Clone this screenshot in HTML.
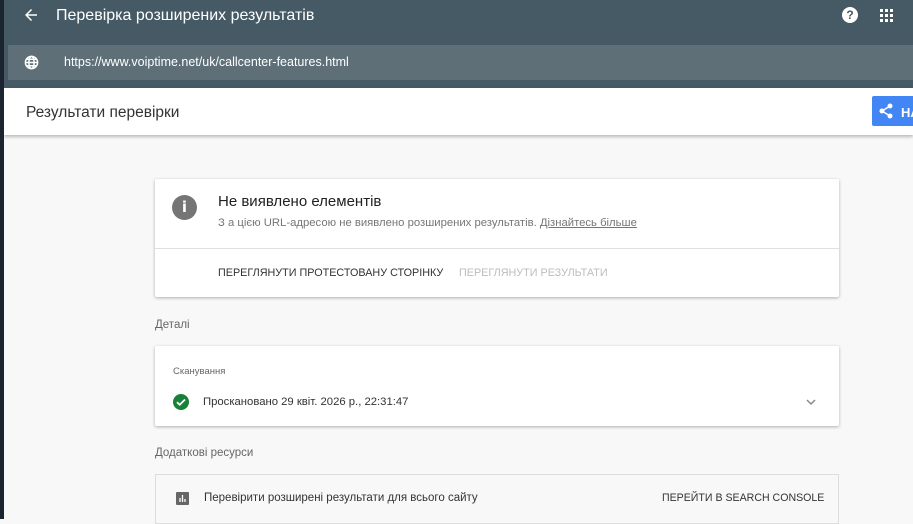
<!DOCTYPE html>
<html><head><meta charset="utf-8"><style>
*{margin:0;padding:0;box-sizing:border-box}
body{width:913px;height:519px;overflow:hidden;background:#f8f8f8;font-family:"Liberation Sans","Noto Sans CJK SC",sans-serif;position:relative}
.abs{position:absolute;white-space:nowrap}
.top{left:0;top:0;width:913px;height:88px;background:#455a64}
.strip{left:0;top:0;width:4px;height:519px;background:#1c2430;z-index:5}
.url{left:8px;top:45px;width:905px;height:35px;background:#5e6f78}
.bar{left:4px;top:88px;width:909px;height:47px;background:#fff;box-shadow:0 2px 3px rgba(0,0,0,.25)}
.card{background:#fff;box-shadow:0 1px 3px rgba(0,0,0,.3);border-radius:2px}
</style></head><body>
<div class="abs strip"></div>
<div class="abs top"></div>
<svg class="abs" style="left:22px;top:6px" width="18" height="18" viewBox="0 0 24 24"><path d="M20 11H7.8l5.6-5.6L12 4l-8 8 8 8 1.4-1.4L7.8 13H20z" fill="#fff"/></svg>
<div class="abs" style="left:56px;top:7px;color:#fff;font-size:16px">Перевірка розширених результатів</div>
<div class="abs" style="left:842px;top:7px;width:16px;height:16px;border-radius:50%;background:#fff;color:#455a64;font-size:12px;font-weight:bold;text-align:center;line-height:16px">?</div>
<svg class="abs" style="left:880px;top:9px" width="13" height="13" viewBox="0 0 13 13" fill="#fff"><rect x="0" y="0" width="3" height="3"/><rect x="5" y="0" width="3" height="3"/><rect x="10" y="0" width="3" height="3"/><rect x="0" y="5" width="3" height="3"/><rect x="5" y="5" width="3" height="3"/><rect x="10" y="5" width="3" height="3"/><rect x="0" y="10" width="3" height="3"/><rect x="5" y="10" width="3" height="3"/><rect x="10" y="10" width="3" height="3"/></svg>
<div class="abs url"></div>
<svg class="abs" style="left:24px;top:55px" width="15" height="15" viewBox="0 0 16 16" fill="none" stroke="#fff" stroke-width="1.6"><circle cx="8" cy="8" r="6.5"/><ellipse cx="8" cy="8" rx="2.8" ry="6.5"/><path d="M1.5 8h13M2.5 4.5h11M2.5 11.5h11"/></svg>
<div class="abs" style="left:64px;top:55px;color:#fff;font-size:12.5px">https://www.voiptime.net/uk/callcenter-features.html</div>
<div class="abs bar"></div>
<div class="abs" style="left:26px;top:104px;color:#333;font-size:15.5px">Результати перевірки</div>
<div class="abs" style="left:872px;top:96px;width:50px;height:30px;background:#4285f4;border-radius:2px"></div>
<svg class="abs" style="left:878px;top:103px" width="16" height="16" viewBox="0 0 16 16" fill="#fff"><circle cx="12" cy="3" r="2.5"/><circle cx="4" cy="8" r="2.5"/><circle cx="12" cy="13" r="2.5"/><path d="M12 3L4 8l8 5" stroke="#fff" stroke-width="1.5" fill="none"/></svg>
<div class="abs" style="left:901px;top:105px;color:#fff;font-size:13px;font-weight:bold">НА</div>

<div class="abs card" style="left:155px;top:179px;width:684px;height:118px"></div>
<div class="abs" style="left:172px;top:195px;width:25px;height:25px;border-radius:50%;background:#757575;color:#fff;font-weight:bold;font-size:15px;text-align:center;line-height:25px;font-family:'DejaVu Sans',sans-serif">i</div>
<div class="abs" style="left:218px;top:193px;color:#212121;font-size:15px">Не виявлено елементів</div>
<div class="abs" style="left:218px;top:217px;color:#757575;font-size:11.3px">З а цією URL-адресою не виявлено розширених результатів. <span style="text-decoration:underline">Дізнайтесь більше</span></div>
<div class="abs" style="left:155px;top:248px;width:684px;height:1px;background:#e0e0e0"></div>
<div class="abs" style="left:218px;top:267px;color:#333;font-size:10.8px">ПЕРЕГЛЯНУТИ ПРОТЕСТОВАНУ СТОРІНКУ</div>
<div class="abs" style="left:459px;top:267px;color:#bdbdbd;font-size:10.8px">ПЕРЕГЛЯНУТИ РЕЗУЛЬТАТИ</div>

<div class="abs" style="left:155px;top:319px;color:#666;font-size:11.5px">Деталі</div>
<div class="abs card" style="left:155px;top:346px;width:684px;height:80px"></div>
<div class="abs" style="left:173px;top:366px;color:#666;font-size:9.5px">Сканування</div>
<svg class="abs" style="left:173px;top:394px" width="16" height="16" viewBox="0 0 16 16"><circle cx="8" cy="8" r="8" fill="#188038"/><path d="M4 8.2l2.7 2.6L12 5.5" stroke="#fff" stroke-width="1.8" fill="none"/></svg>
<div class="abs" style="left:203px;top:396px;color:#333;font-size:11.3px">Проскановано 29 квіт. 2026 р., 22:31:47</div>
<svg class="abs" style="left:805px;top:397px" width="12" height="10" viewBox="0 0 12 10"><path d="M2 3l4 4 4-4" stroke="#888" stroke-width="1.5" fill="none"/></svg>

<div class="abs" style="left:155px;top:447px;color:#666;font-size:11.5px">Додаткові ресурси</div>
<div class="abs" style="left:155px;top:474px;width:684px;height:50px;background:#f8f8f8;border:1px solid #ddd"></div>
<div class="abs" style="left:176px;top:492px;width:13px;height:13px;background:#666;border-radius:1px"></div>
<svg class="abs" style="left:176px;top:492px" width="13" height="13" viewBox="0 0 13 13"><path d="M4 10V6M6.5 10V3M9 10V7" stroke="#fff" stroke-width="1.3"/></svg>
<div class="abs" style="left:204px;top:492px;color:#333;font-size:11.5px">Перевірити розширені результати для всього сайту</div>
<div class="abs" style="left:662px;top:492px;color:#333;font-size:10.6px">ПЕРЕЙТИ В SEARCH CONSOLE</div>
</body></html>
